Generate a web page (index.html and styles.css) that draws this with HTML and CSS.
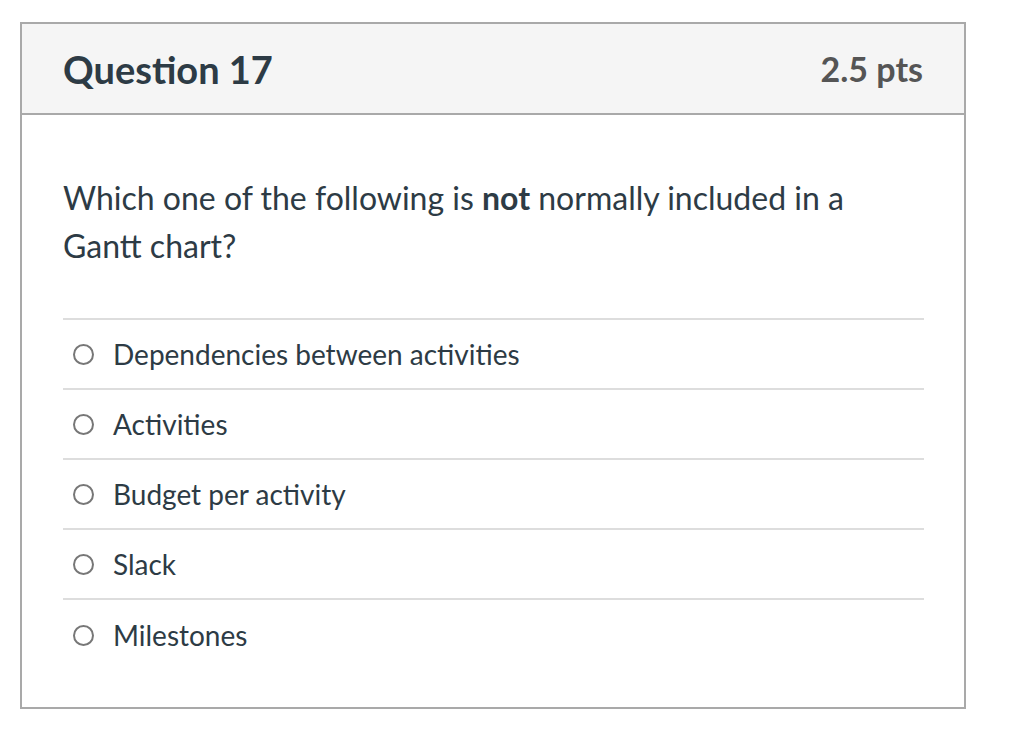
FILE: index.html
```html
<!DOCTYPE html>
<html lang="en">
<head>
<meta charset="utf-8">
<title>Question 17</title>
<link rel="stylesheet" href="styles.css">
</head>
<body>
<div class="card">
  <div class="card-header">
    <h2 class="q-title">Question 17</h2>
    <span class="q-pts">2.5 pts</span>
  </div>
  <div class="card-body">
    <p class="q-text">Which one of the following is <strong>not</strong> normally included in a Gantt chart?</p>
    <ul class="answers">
      <li class="answer"><span class="radio"></span><span class="label">Dependencies between activities</span></li>
      <li class="answer"><span class="radio"></span><span class="label">Activities</span></li>
      <li class="answer"><span class="radio"></span><span class="label">Budget per activity</span></li>
      <li class="answer"><span class="radio"></span><span class="label">Slack</span></li>
      <li class="answer"><span class="radio"></span><span class="label">Milestones</span></li>
    </ul>
  </div>
</div>
</body>
</html>
```

FILE: styles.css
```css
* { box-sizing: border-box; }
html, body { margin: 0; padding: 0; background: #fff; }
body {
  font-family: Lato, "Open Sans", "Liberation Sans", sans-serif;
  color: #2d3b45;
  padding: 22px 0 0 20px;
}
.card {
  width: 946px;
  height: 687px;
  border: 2px solid #a9a9a9;
}
.card-header {
  height: 91px;
  background: #f5f5f5;
  border-bottom: 2px solid #a9a9a9;
  display: flex;
  align-items: center;
  justify-content: space-between;
  padding: 0 41px 0 41px;
}
.q-title {
  margin: 0;
  font-size: 38px;
  font-weight: 700;
  color: #2d3b45;
}
.q-pts {
  font-size: 34px;
  font-weight: 700;
  color: #555;
}
.card-body {
  padding: 59px 40px 0 41px;
}
.q-text {
  margin: 0;
  font-size: 32px;
  line-height: 48px;
  width: 820px;
}
.q-text strong { font-weight: 700; }
.answers {
  list-style: none;
  margin: 48px 0 0 0;
  padding: 0;
  border-top: 2px solid #ddd;
}
.answer {
  height: 70px;
  display: flex;
  align-items: center;
  gap: 19px;
  padding-left: 10px;
  border-bottom: 2px solid #ddd;
  font-size: 28px;
}
.answer:last-child { border-bottom: none; }
.radio {
  width: 21px;
  height: 21px;
  border: 2px solid #777;
  border-radius: 50%;
  flex: none;
}
```
